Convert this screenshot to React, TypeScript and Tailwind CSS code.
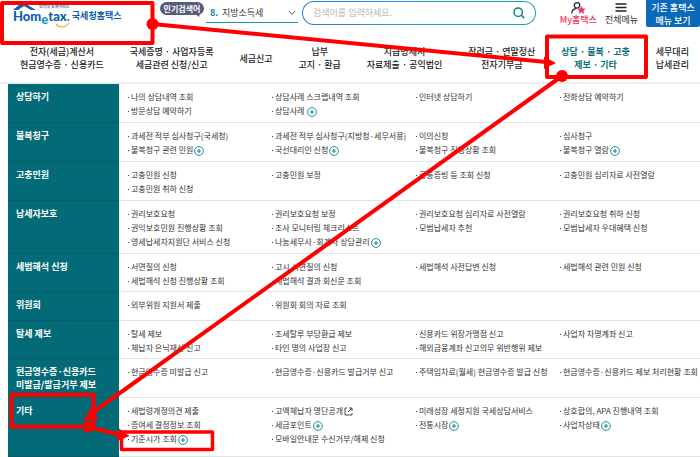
import { clsx } from 'clsx'

type Mark = 'plus' | 'external'
type Item = string | [string, Mark]
type Row = { title: string; size: string; cols: Item[][] }

const NAV: string[][] = [
  ['전자(세금)계산서', '현금영수증 · 신용카드'],
  ['국세증명 · 사업자등록', '세금관련 신청/신고'],
  ['세금신고'],
  ['납부', '고지 · 환급'],
  ['지급명세서', '자료제출 · 공익법인'],
  ['장려금 · 연말정산', '전자기부금'],
  ['상담 · 불복 · 고충', '제보 · 기타'],
  ['세무대리', '납세관리'],
]

const ACTIVE = 6

const ROWS: Row[] = [
  {
    title: '상담하기',
    size: 'min-h-[39px]',
    cols: [
      ['나의 상담내역 조회', '방문상담 예약하기'],
      ['상담사례 스크랩내역 조회', ['상담사례 ', 'plus']],
      ['인터넷 상담하기'],
      ['전화상담 예약하기'],
    ],
  },
  {
    title: '불복청구',
    size: 'min-h-[39px]',
    cols: [
      ['과세전 적부 심사청구(국세청)', ['불복청구 관련 민원', 'plus']],
      ['과세전 적부 심사청구(지방청·세무서용)', ['국선대리인 신청', 'plus']],
      ['이의신청', '불복청구 진행상황 조회'],
      ['심사청구', ['불복청구 열람', 'plus']],
    ],
  },
  {
    title: '고충민원',
    size: 'min-h-[39px]',
    cols: [
      ['고충민원 신청', '고충민원 취하 신청'],
      ['고충민원 보정'],
      ['공통증빙 등 조회 신청'],
      ['고충민원 심리자료 사전열람'],
    ],
  },
  {
    title: '납세자보호',
    size: 'min-h-[53px]',
    cols: [
      ['권리보호요청', '권익보호민원 진행상황 조회', '영세납세자지원단 서비스 신청'],
      ['권리보호요청 보정', '조사 모니터링 체크리스트', ['나눔세무사·회계사 상담관리', 'plus']],
      ['권리보호요청 심리자료 사전열람', '모범납세자 추천'],
      ['권리보호요청 취하 신청', '모범납세자 우대혜택 신청'],
    ],
  },
  {
    title: '세법해석 신청',
    size: 'min-h-[38px]',
    cols: [
      ['서면질의 신청', '세법해석 신청 진행상황 조회'],
      ['고시 서면질의 신청', '세법해석 결과 회신문 조회'],
      ['세법해석 사전답변 신청'],
      ['세법해석 관련 민원 신청'],
    ],
  },
  {
    title: '위원회',
    size: 'min-h-[29px]',
    cols: [['외부위원 지원서 제출'], ['위원회 회의 자료 조회'], [], []],
  },
  {
    title: '탈세 제보',
    size: 'min-h-[38px]',
    cols: [
      ['탈세 제보', '체납자 은닉재산 신고'],
      ['조세탈루 부당환급 제보', '타인 명의 사업장 신고'],
      ['신용카드 위장가맹점 신고', '해외금융계좌 신고의무 위반행위 제보'],
      ['사업자 차명계좌 신고'],
    ],
  },
  {
    title: '현금영수증·신용카드\n미발급/발급거부 제보',
    size: 'min-h-[39px]',
    cols: [
      ['현금영수증 미발급 신고'],
      ['현금영수증·신용카드 발급거부 신고'],
      ['주택임차료(월세) 현금영수증 발급 신청'],
      ['현금영수증·신용카드 제보 처리현황 조회'],
    ],
  },
  {
    title: '기타',
    size: 'grow',
    cols: [
      ['세법령개정의견 제출', '증여세 결정정보 조회', ['기준시가 조회', 'plus']],
      [['고액체납자 명단공개', 'external'], ['세금포인트', 'plus'], '모바일안내문 수신거부/해제 신청'],
      ['미래성장 세정지원 국세상담서비스', ['전통시장', 'plus']],
      ['상호합의, APA 진행내역 조회', ['사업자상태', 'plus']],
    ],
  },
]

export default function App() {
  return (
    <div className="relative flex min-h-screen flex-col overflow-hidden bg-white font-['Noto_Sans_CJK_KR',sans-serif] text-[#333]">
      <TopBar />
      <MainNav />
      <main className="flex grow flex-col pl-2">
        {ROWS.map((row) => (
          <MenuRow key={row.title} row={row} />
        ))}
      </main>
      <Annotations />
    </div>
  )
}

function TopBar() {
  return (
    <header className="flex h-7 items-start">
      <a href="#" className="w-40 shrink-0 pl-[13px]">
        <Logo />
      </a>

      <span className="relative mt-0.5 w-11 shrink-0 rounded-full bg-[#575b7c] text-center text-[8px] leading-[13px] font-bold text-white">
        인기검색어
        <svg className="absolute right-1 -bottom-0.5" width="6" height="4" viewBox="0 0 6 4" aria-hidden>
          <path d="M0 0h6L5 4z" fill="#575b7c" />
        </svg>
      </span>

      <label className="relative ml-0.5 flex h-[23px] w-[92px] shrink-0 items-center border-b border-[#1f969c] pt-1 pl-1 text-[9px]">
        <span className="w-3 font-bold text-[#0e8790]">8.</span>
        <select aria-label="인기검색어" className="grow appearance-none bg-transparent outline-none">
          <option>지방소득세</option>
        </select>
        <svg className="absolute right-0.5 bottom-1.5" width="8" height="6" viewBox="0 0 8 6" fill="none" aria-hidden>
          <path d="M.8 1 4 4.4 7.2 1" stroke="#555" />
        </svg>
      </label>

      <form className="mt-px ml-1 grow rounded-full bg-linear-to-r from-[#2b7fd8] via-[#1f9bd0] to-[#16a3ad] p-px">
        <div className="flex h-[22px] items-center rounded-full bg-white pr-2.5 pl-2.5">
          <input
            type="text"
            aria-label="검색어"
            placeholder="검색어를 입력하세요."
            className="min-w-0 grow text-[9px] outline-none placeholder:text-[#b5b5b5]"
          />
          <button type="submit" aria-label="검색">
            <svg width="12" height="12" viewBox="0 0 12 12" fill="none" stroke="#0a7c88" strokeWidth="1.4">
              <circle cx="5.2" cy="5.2" r="4.2" />
              <path d="m8.3 8.3 3 3" />
            </svg>
          </button>
        </div>
      </form>

      <a href="#" className="ml-6 flex shrink-0 flex-col items-center pt-0.5 text-[9px] leading-3 font-medium text-[#ee3763]">
        <svg width="16" height="12" viewBox="0 0 16 12" fill="none" aria-hidden>
          <circle cx="7" cy="3.4" r="2.7" stroke="#1c2747" strokeWidth="1.3" />
          <path d="M1.8 11.4c0-2.8 2-4.6 4.4-4.8" stroke="#1c2747" strokeWidth="1.3" />
          <path
            d="m11.4 4.4 1.1 2.3 2.5.3-1.8 1.8.4 2.5-2.2-1.2-2.2 1.2.4-2.5L7.8 7l2.5-.3z"
            fill="#ee3763"
            stroke="#ee3763"
            strokeWidth=".6"
            strokeLinejoin="round"
          />
        </svg>
        My홈택스
      </a>

      <button type="button" className="ml-2 flex shrink-0 flex-col items-center pt-0.5 text-[9px] leading-3">
        <svg width="12" height="12" viewBox="0 0 12 12" stroke="#222" strokeWidth="1.5" aria-hidden>
          <path d="M.5 2h11M.5 5.500h11M.5 9h11" />
        </svg>
        전체메뉴
      </button>

      <button
        type="button"
        className="ml-2 h-[27px] w-[54px] shrink-0 rounded-b-xs bg-[#0b69b9] text-[9px] font-medium text-white"
      >
        <span className="block leading-[13px]">기존 홈택스</span>
        <span className="block leading-[13px]">메뉴 보기</span>
      </button>
    </header>
  )
}

function Logo() {
  return (
    <span className="relative flex h-7 items-center pt-1 font-bold whitespace-nowrap text-[#0b62ae]">
      <svg className="absolute top-1 left-0" width="62" height="24" viewBox="0 0 62 24" fill="none" aria-hidden>
        <path d="M0 6 7 0h6l10 6h-5l-7-4-6 4z" fill="#0b62ae" />
        <path d="M43 20c3 4 10 4 13-1" stroke="#f2b233" strokeWidth="1.3" />
      </svg>
      <span className="absolute top-1 left-[26px] text-[4px] leading-[5px] text-[#2a7fa8]">인터넷 납세서비스</span>
      <span className="font-[Lato] text-[13px] leading-4 font-black">
        Hom<sub className="text-[13px] leading-none text-[#1d8fd6]">e</sub>tax<span className="text-[#2fa05a]">.</span>
      </span>
      <span className="ml-0.5 text-[9px] leading-3">국세청홈택스</span>
    </span>
  )
}

function MainNav() {
  return (
    <nav className="flex h-14 items-center justify-between border-b-2 border-[#ececec] pt-1.5 pr-[11px] pl-5">
      {NAV.map((lines, i) => (
        <a
          key={lines[0]}
          href="#"
          className={clsx(
            'text-center text-[9px] leading-[13px] whitespace-nowrap',
            i === ACTIVE ? 'font-bold text-[#0b7079]' : 'font-medium text-[#222]',
          )}
        >
          {lines.map((line) => (
            <span key={line} className="block">
              {line}
            </span>
          ))}
        </a>
      ))}
    </nav>
  )
}

function MenuRow({ row }: { row: Row }) {
  return (
    <section className={clsx('flex', row.size)}>
      <h2 className="w-[111px] shrink-0 border-b border-[#0a5c66] bg-[#036b78] pt-1.5 pl-2 text-[9px] leading-[13px] font-bold whitespace-pre text-white">
        {row.title}
      </h2>
      <div className="grid grow grid-cols-4 border-b border-[#e4e4e4] pt-1.5 pr-[5px] pb-[3px]">
        {row.cols.map((items, i) => (
          <ul key={i} className="pl-[9px] text-[8px] leading-[14px] whitespace-nowrap">
            {items.map((item) => {
              const [text, mark] = typeof item === 'string' ? [item, null] : item
              return (
                <li key={text} className="flex h-3.5 items-center">
                  <i className="mr-0.5 size-px shrink-0 bg-[#444]" />
                  <a href="#" className="flex items-center whitespace-pre">
                    {text}
                    {mark === 'plus' && <PlusMark />}
                    {mark === 'external' && <ExternalMark />}
                  </a>
                </li>
              )
            })}
          </ul>
        ))}
      </div>
    </section>
  )
}

function PlusMark() {
  return (
    <svg className="mt-px ml-px" width="10" height="10" viewBox="0 0 10 10" fill="none" stroke="#1f8e9d" aria-hidden>
      <circle cx="5" cy="5" r="4.4" />
      <path d="M5 3v4M3 5h4" strokeWidth="1.2" />
    </svg>
  )
}

function ExternalMark() {
  return (
    <svg className="mt-px ml-px" width="9" height="9" viewBox="0 0 9 9" fill="none" stroke="#333" strokeWidth=".9" aria-hidden>
      <path d="M3 1H1v7h7V6M5 1h3v3M8 1 4 5" />
    </svg>
  )
}

// Red guide marks: logo -> menu tab -> category -> final link
function Annotations() {
  return (
    <svg
      className="pointer-events-none absolute top-0 left-0"
      width="700"
      height="457"
      viewBox="0 0 700 457"
      fill="none"
      stroke="#fe0000"
      strokeWidth="4"
      strokeLinejoin="round"
      aria-hidden
    >
      <rect x="2" y="3" width="150.500" height="40" />
      <rect x="547" y="36.500" width="99" height="40.500" />
      <rect x="11.500" y="394.700" width="82" height="32" />
      <rect x="121.500" y="432" width="91" height="17.500" strokeWidth="3.500" />
      <path d="M152.500 24 546 62M562 76 92 413M88 427l31 7.500" />
      <g fill="#fe0000" stroke="none">
        <circle cx="152.500" cy="24" r="6" />
        <circle cx="562" cy="76" r="6" />
        <circle cx="88" cy="427" r="5.500" />
        <path d="m556 63-12 6V56.500z" />
        <path d="m83 421.500 8-14 7.500 11.500z" />
        <path d="m129.500 436-13 5.500 2.500-13z" />
      </g>
    </svg>
  )
}
